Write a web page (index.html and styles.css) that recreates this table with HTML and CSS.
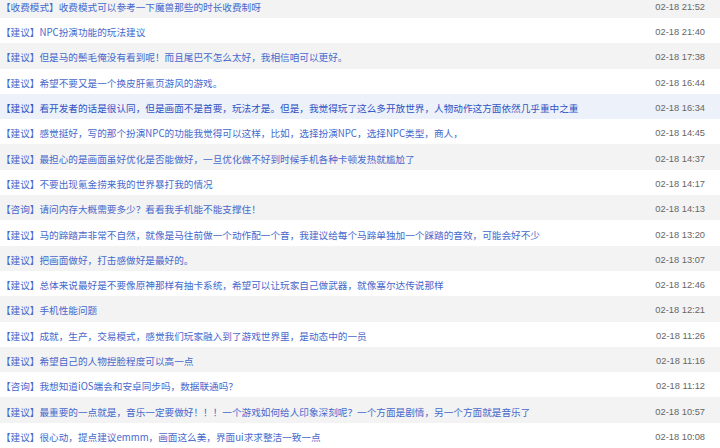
FILE: index.html
```html
<!DOCTYPE html>
<html lang="zh-CN">
<head>
<meta charset="utf-8">
<title>反馈列表</title>
<link rel="stylesheet" href="styles.css">
</head>
<body>
<ul class="list">
  <li class="row"><a class="title">【收费模式】收费模式可以参考一下魔兽那些的时长收费制呀</a><span class="time">02-18 21:52</span></li>
  <li class="row"><a class="title">【建议】NPC扮演功能的玩法建议</a><span class="time">02-18 21:40</span></li>
  <li class="row"><a class="title">【建议】但是马的鬃毛俺没有看到呢！而且尾巴不怎么太好，我相信咱可以更好。</a><span class="time">02-18 17:38</span></li>
  <li class="row"><a class="title">【建议】希望不要又是一个换皮肝氪页游风的游戏。</a><span class="time">02-18 16:44</span></li>
  <li class="row hover"><a class="title">【建议】看开发者的话是很认同，但是画面不是首要，玩法才是。但是，我觉得玩了这么多开放世界，人物动作这方面依然几乎重中之重</a><span class="time">02-18 16:34</span></li>
  <li class="row"><a class="title">【建议】感觉挺好，写的那个扮演NPC的功能我觉得可以这样，比如，选择扮演NPC，选择NPC类型，商人，</a><span class="time">02-18 14:45</span></li>
  <li class="row"><a class="title">【建议】最担心的是画面虽好优化是否能做好，一旦优化做不好到时候手机各种卡顿发热就尴尬了</a><span class="time">02-18 14:37</span></li>
  <li class="row"><a class="title">【建议】不要出现氪金捞来我的世界暴打我的情况</a><span class="time">02-18 14:17</span></li>
  <li class="row"><a class="title">【咨询】请问内存大概需要多少？看看我手机能不能支撑住！</a><span class="time">02-18 14:13</span></li>
  <li class="row"><a class="title">【建议】马的蹄踏声非常不自然，就像是马往前做一个动作配一个音，我建议给每个马蹄单独加一个踩踏的音效，可能会好不少</a><span class="time">02-18 13:20</span></li>
  <li class="row"><a class="title">【建议】把画面做好，打击感做好是最好的。</a><span class="time">02-18 13:07</span></li>
  <li class="row"><a class="title">【建议】总体来说最好是不要像原神那样有抽卡系统，希望可以让玩家自己做武器，就像塞尔达传说那样</a><span class="time">02-18 12:46</span></li>
  <li class="row"><a class="title">【建议】手机性能问题</a><span class="time">02-18 12:21</span></li>
  <li class="row"><a class="title">【建议】成就，生产，交易模式，感觉我们玩家融入到了游戏世界里，是动态中的一员</a><span class="time">02-18 11:26</span></li>
  <li class="row"><a class="title">【建议】希望自己的人物捏脸程度可以高一点</a><span class="time">02-18 11:16</span></li>
  <li class="row"><a class="title">【咨询】我想知道iOS端会和安卓同步吗，数据联通吗？</a><span class="time">02-18 11:12</span></li>
  <li class="row"><a class="title">【建议】最重要的一点就是，音乐一定要做好！！！一个游戏如何给人印象深刻呢？一个方面是剧情，另一个方面就是音乐了</a><span class="time">02-18 10:57</span></li>
  <li class="row"><a class="title">【建议】很心动，提点建议emmm，画面这么美，界面ui求求整洁一致一点</a><span class="time">02-18 10:08</span></li>
</ul>
</body>
</html>
```
FILE: styles.css
```css
html, body {
  margin: 0;
  padding: 0;
  background: #ffffff;
  height: 448px;
  overflow: hidden;
}

.list {
  list-style: none;
  margin: -7.3px 0 0 0;
  padding: 0;
}

.row {
  box-sizing: border-box;
  display: flex;
  align-items: center;
  justify-content: space-between;
  height: 25.3px;
  padding: 3px 15px 0 1px;
  background: #ffffff;
}

.row:nth-child(odd) {
  background: #f3f3f3;
}

.row.hover {
  background: #edf1f9;
}

.title {
  font-family: "Noto Sans CJK SC", "Noto Sans", sans-serif;
  font-size: 9.65px;
  line-height: 14px;
  color: #4668cc;
  white-space: nowrap;
  text-decoration: none;
}

.row.hover .title {
  color: #2f52c4;
}

.time {
  font-family: "Liberation Sans", Arial, sans-serif;
  font-size: 9.3px;
  line-height: 14px;
  color: #666666;
  white-space: nowrap;
}
```
